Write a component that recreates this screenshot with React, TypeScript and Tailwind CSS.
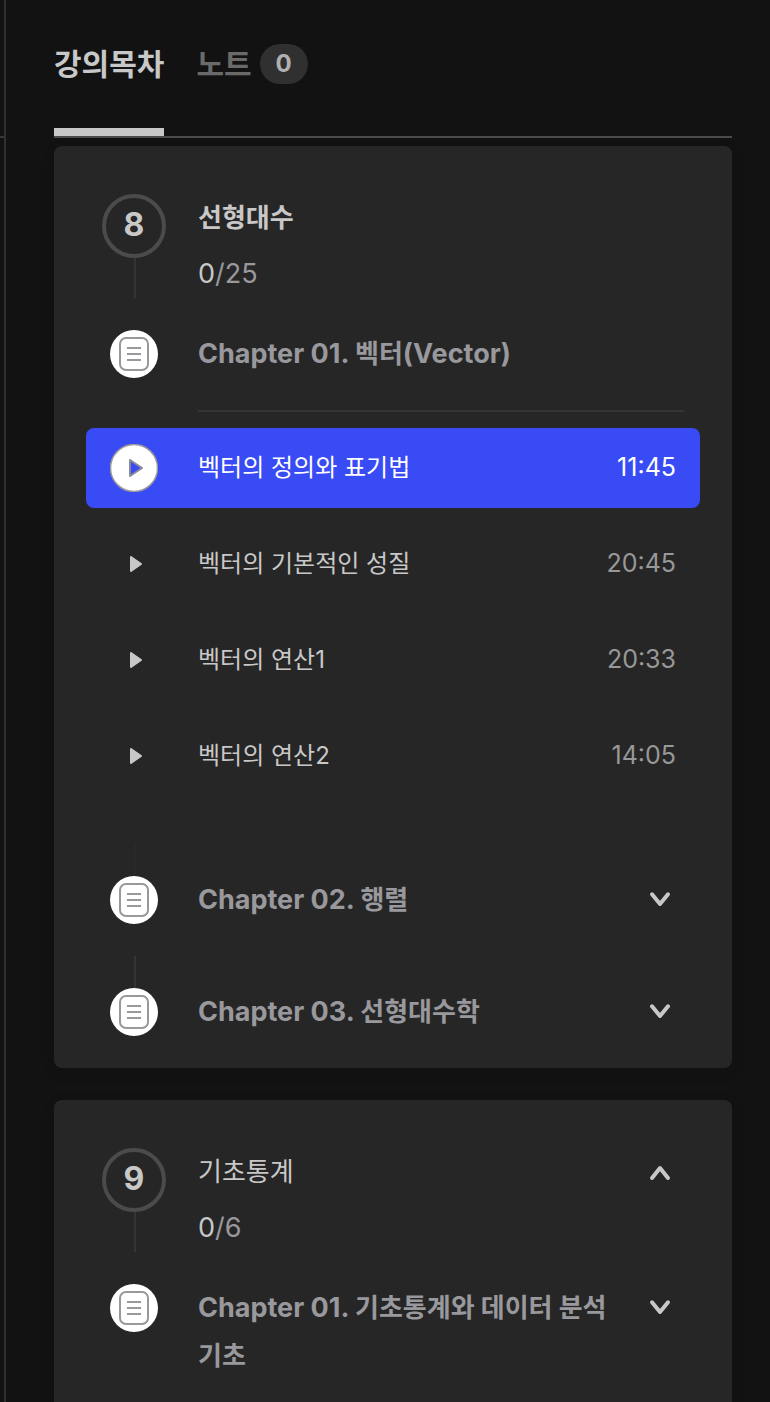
import React, { useState } from "react";

type Lesson = { title: string; time: string };
type Chapter = {
  label: string;
  name: string;
  term?: string;
  expandable: boolean;
  lessons?: Lesson[];
};
type Part = {
  number: number;
  title: string;
  current: boolean;
  done: number;
  total: number;
  chapters: Chapter[];
};

const parts: Part[] = [
  {
    number: 8,
    title: "선형대수",
    current: true,
    done: 0,
    total: 25,
    chapters: [
      {
        label: "Chapter 01.",
        name: "벡터",
        term: "(Vector)",
        expandable: false,
        lessons: [
          { title: "벡터의 정의와 표기법", time: "11:45" },
          { title: "벡터의 기본적인 성질", time: "20:45" },
          { title: "벡터의 연산1", time: "20:33" },
          { title: "벡터의 연산2", time: "14:05" },
        ],
      },
      { label: "Chapter 02.", name: "행렬", expandable: true },
      { label: "Chapter 03.", name: "선형대수학", expandable: true },
    ],
  },
  {
    number: 9,
    title: "기초통계",
    current: false,
    done: 0,
    total: 6,
    chapters: [{ label: "Chapter 01.", name: "기초통계와 데이터 분석 기초", expandable: true }],
  },
];

function Chevron({ up = false }: { up?: boolean }) {
  return (
    <svg viewBox="0 0 48 48" className="size-12 shrink-0" fill="none" aria-hidden="true">
      <path
        d={up ? "M16 30L24 20L32 30" : "M16 18.3L24 28L32 18.3"}
        stroke="#c8c8c8"
        strokeWidth="4"
        strokeLinecap="round"
        strokeLinejoin="round"
      />
    </svg>
  );
}

function DocumentIcon() {
  return (
    <svg viewBox="0 0 48 48" className="size-12" fill="none" aria-hidden="true">
      <circle cx="24" cy="24" r="24" fill="#fff" />
      <rect x="10" y="8" width="28" height="32" rx="6" stroke="#98989d" strokeWidth="2" />
      <path d="M17 18H31M17 24H31M17 30H31" stroke="#98989d" strokeWidth="2" />
    </svg>
  );
}

function PlayIcon({ active }: { active: boolean }) {
  return (
    <svg viewBox="0 0 48 48" className="size-12" fill="none" aria-hidden="true">
      {active ? (
        <>
          <circle cx="24" cy="24" r="23.5" fill="#fff" stroke="#98989d" strokeWidth="1.5" />
          <path
            d="M20 16L32 24L20 32Z"
            fill="#384bf5"
            stroke="#8a8a96"
            strokeWidth="2"
            strokeLinejoin="round"
          />
        </>
      ) : (
        <path
          d="M21 17L31 24L21 31Z"
          fill="#c8c8c8"
          stroke="#c8c8c8"
          strokeWidth="2"
          strokeLinejoin="round"
        />
      )}
    </svg>
  );
}

function LessonRow({
  lesson,
  active,
  onSelect,
}: {
  lesson: Lesson;
  active: boolean;
  onSelect: () => void;
}) {
  return (
    <li>
      <button
        type="button"
        onClick={onSelect}
        aria-current={active}
        className={`flex min-h-20 w-full items-center rounded-lg px-6 text-left text-2xl ${
          active ? "bg-[#384bf5] text-white" : "text-[#c8c8c8]"
        }`}
      >
        <span className="mr-10 shrink-0">
          <PlayIcon active={active} />
        </span>
        <span className="flex-1">{lesson.title}</span>
        <span className={`text-[25px] ${active ? "text-white" : "text-[#989898]"}`}>{lesson.time}</span>
      </button>
    </li>
  );
}

function ChapterBlock({
  chapter,
  first,
  afterLessons,
}: {
  chapter: Chapter;
  first: boolean;
  afterLessons: boolean;
}) {
  const [selected, setSelected] = useState(0);
  return (
    <li>
      <button type="button" className="flex w-full items-stretch pr-12 pl-14 text-left">
        <span className="mr-10 flex w-12 shrink-0 flex-col items-center">
          <span
            className={`ml-0.5 h-8 w-0.5 ${
              first ? "bg-transparent" : afterLessons ? "bg-[#292929]" : "bg-[#343434]"
            }`}
          />
          <DocumentIcon />
        </span>
        <span className="flex-1 py-8 text-[27px] leading-12 font-bold break-keep text-[#98989d]">
          {chapter.label} <span className="text-[26px]">{chapter.name}</span>
          {chapter.term}
        </span>
        {chapter.expandable && (
          <span className="mt-8">
            <Chevron />
          </span>
        )}
      </button>
      {chapter.lessons && (
        <>
          <hr className="mr-12 ml-36 border-t-2 border-[#343434]" />
          <ul className="flex flex-col gap-4 px-8 pt-4 pb-12">
            {chapter.lessons.map((lesson, i) => (
              <LessonRow
                key={lesson.title}
                lesson={lesson}
                active={i === selected}
                onSelect={() => setSelected(i)}
              />
            ))}
          </ul>
        </>
      )}
    </li>
  );
}

function PartCard({ part }: { part: Part }) {
  return (
    <section className="rounded-lg bg-[#262626] pt-12 shadow-[0_4px_16px_rgba(0,0,0,0.08)]">
      <button type="button" className="flex w-full items-stretch px-12 text-left">
        <span className="mr-8 flex w-16 shrink-0 flex-col items-center">
          <span className="flex size-16 items-center justify-center rounded-full border-4 border-[#4b4b4b] pb-0.5 text-[32px] font-bold text-[#c8c8c8]">
            {part.number}
          </span>
          <span className="ml-0.5 w-0.5 flex-1 bg-[#343434]" />
        </span>
        <span className="flex flex-1 flex-col gap-2 text-[26px] leading-12">
          <span className={`text-[#c8c8c8] ${part.current ? "font-bold" : "font-normal"}`}>{part.title}</span>
          <span className="text-[27px] text-[#98989d]">
            <span className="text-[#c8c8c8]">{part.done}</span>/{part.total}
          </span>
        </span>
        {!part.current && <Chevron up />}
      </button>
      <ul>
        {part.chapters.map((chapter, i) => (
          <ChapterBlock
            key={chapter.label}
            chapter={chapter}
            first={i === 0}
            afterLessons={i > 0 && Boolean(part.chapters[i - 1].lessons)}
          />
        ))}
      </ul>
    </section>
  );
}

export default function App() {
  return (
    <div className="flex min-h-screen bg-[#121212] font-[Inter,'Noto_Sans_CJK_KR',sans-serif]">
      <div className="w-1.5 shrink-0 border-r-2 border-[#303030]">
        <div className="h-[138px] border-b-2 border-[#383838]" />
      </div>
      <main className="min-w-0 flex-1 pr-[38px] pb-8 pl-12">
        <nav className="mb-2 flex items-stretch gap-8 border-b-2 border-[#4b4b4b] text-[30px] leading-10 font-bold">
          <button type="button" className="border-b-8 border-[#c8c8c8] pt-11 pb-11 text-[#c8c8c8]">
            강의목차
          </button>
          <button type="button" className="flex items-start gap-2 pt-11 text-[#6a6a6a]">
            노트
            <span className="flex h-10 w-12 items-center justify-center rounded-full bg-[#303030] text-2xl text-[#b0b0b0]">
              0
            </span>
          </button>
        </nav>
        <div className="flex flex-col gap-8">
          {parts.map((part) => (
            <PartCard key={part.number} part={part} />
          ))}
        </div>
      </main>
    </div>
  );
}
